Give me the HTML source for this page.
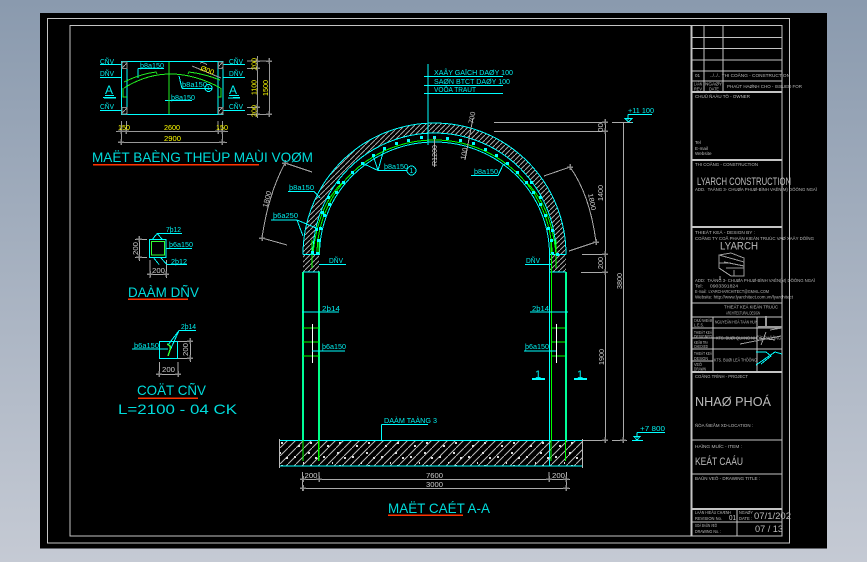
<!DOCTYPE html>
<html><head><meta charset="utf-8"><title>Drawing</title>
<style>
html,body{margin:0;padding:0;width:867px;height:562px;overflow:hidden;background:linear-gradient(180deg,#8a9aae 0%,#c5cad4 100%)}
svg{position:absolute;left:0;top:0;display:block}
text{font-family:"Liberation Sans",sans-serif;white-space:pre}
.c{fill:#0ee;font-size:7px}
.y{fill:#ff0;font-size:7px}
.w{fill:#ccc;font-size:7px}
.T{fill:#00dcdc;font-size:14px}
.b{fill:#bbb;font-size:4.6px}
.B{fill:#bbb;font-size:11px}
</style></head><body>
<svg width="867" height="562" viewBox="0 0 867 562" xmlns="http://www.w3.org/2000/svg">
<defs>
<pattern id="h" patternUnits="userSpaceOnUse" width="5" height="5"><path d="M-1,6L6,-1" stroke="#aaa" stroke-width="1" fill="none"/></pattern>
<pattern id="f" patternUnits="userSpaceOnUse" width="8" height="8"><path d="M-1,9L9,-1" stroke="#bbb" stroke-width="1" fill="none"/></pattern>
<pattern id="d" patternUnits="userSpaceOnUse" width="29" height="23"><path d="M8,9h2M20,6h2M4,20h2M18,16h2M25,21h2M13,3h1" stroke="#ddd" stroke-width="2"/></pattern>
<path id="t" d="M-3,0H3M0,-3V3" stroke="#888" stroke-width="1.5" fill="none"/>
</defs>
<rect x="40" y="13" width="787" height="535.5" fill="#000"/>

<g shape-rendering="crispEdges">
<!-- frames -->
<g fill="none" stroke="#c4c4c4" stroke-width="1">
<rect x="47.5" y="18.5" width="742" height="524.5"/>
<rect x="70" y="25.5" width="712" height="510.5"/>
<path d="M691.5,25V536" stroke-width="2"/>
<path d="M691,37.5H782M691,48.5H782M691,60H782M691,71H782M691,81H782"/>
<path d="M691,92H782M691,160H782M691,227H782M691,372H782M691,509H782" stroke-width="2"/>
<path d="M704,25.5V92M723,25.5V92"/>
<path d="M691,303H782M691,317H782M691,328H782M713,338H757M691,338H713M691,349H782M691,361H713"/>
<path d="M713,317V372M757,317V372"/>
<path d="M691,440H782M691,474H782M691,522H782M737,509V536"/>
</g>

<!-- plan -->
<g fill="none" stroke="#0ff" stroke-width="1">
<rect x="121.5" y="61.5" width="101.5" height="53"/>
<path d="M127,61V114M218,61V114"/>
<path d="M100,64.5H121M100,77.5H121M100,110.5H121M223,64.5H245M223,77.5H245M223,110.5H245"/>
<path d="M103,97.5H116M233,97.5H240" stroke-width="1"/>
<path d="M105,95.5H114M104,98H116" stroke-width="1"/>
<path d="M228,98H240M229,95.5H239" stroke-width="1"/>
<path d="M138,68.5H164M138,68.5V78M165,100.5H192M182,88.5H212M182,88.5L179,76"/>
</g>
<g fill="url(#h)" stroke="#888" stroke-width=".6">
<rect x="122" y="62" width="5" height="6.5"/><rect x="122" y="107.5" width="5" height="6.5"/>
<rect x="218.5" y="62" width="4.5" height="6.5"/><rect x="218.5" y="107.5" width="4.5" height="6.5"/>
</g>
<g fill="none" stroke="#2e2" stroke-width="1">
<path d="M169,62V114M124,88Q169,60 220.5,88M124,82Q140,74 156,72L157,74M188,74L189,72Q205,74 220,80"/>
<path d="M123,88V97H127M221,88V97H218"/>
</g>
<circle cx="208.5" cy="88" r="3.5" fill="none" stroke="#0ff"/>
<g fill="none" stroke="#999" stroke-width="1">
<path d="M192,66L221,78"/>
<path d="M257.5,56V118M269.5,60V115M247,61H272M247,68.5H260M247,107.5H260M247,114.5H272"/>
<path d="M116,131.5H228M120,142.5H227M121.5,121V145M126.5,121V134M218,121V134M222.5,121V145"/>
<path d="M200,63C203,62 205,63 207,65"/>
</g>
<g fill="none" stroke="#f30" stroke-width="1.5">
<path d="M93,164.5H259M128,299H188M138,398H198M388,515H463"/>
</g>

<!-- section -->
<path d="M303,254.5A131.5,131.5 0 0 1 566,254.5H556A121.5,121.5 0 0 0 313,254.5Z" fill="url(#h)"/>
<g fill="none" stroke="#0ff" stroke-width="1">
<path d="M303,254.5A131.5,131.5 0 0 1 566,254.5M313,254.5A121.5,121.5 0 0 1 556,254.5"/>
<path d="M319.5,254.5A115,112.5 0 0 1 549.5,254.5"/>
<path d="M549.5,254V466"/>
</g>
<g fill="none" stroke="#0f0" stroke-width="1">
<path d="M317,254.5A117.5,114.5 0 0 1 552,254.5"/>
<path d="M313,254Q318,205 343,182M556,254Q551,205 526,182"/>
<path d="M312,254V240M319,254V240M556,254V240M551,254V240"/>
</g>
<g fill="url(#h)"><rect x="303" y="254" width="16" height="18"/><rect x="550" y="254" width="16" height="18"/></g>
<path d="M303,254.5H320M303,272H320M549,254.5H566M549,272H566" stroke="#0ff" fill="none"/>
<path d="M312,254V268M556,254V268" stroke="#0f0" fill="none"/>
<g fill="#0ff">
<rect x="420" y="136" width="3" height="3"/><rect x="407" y="139" width="3" height="3"/><rect x="395" y="142" width="3" height="3"/><rect x="383" y="147" width="3" height="3"/><rect x="372" y="154" width="3" height="3"/><rect x="361" y="162" width="3" height="3"/><rect x="351" y="171" width="3" height="3"/><rect x="342" y="181" width="3" height="3"/><rect x="335" y="191" width="3" height="3"/><rect x="328" y="203" width="3" height="3"/><rect x="323" y="214" width="3" height="3"/><rect x="319" y="227" width="3" height="3"/><rect x="317" y="239" width="3" height="3"/><rect x="316" y="252" width="3" height="3"/>
<rect x="337" y="181" width="3" height="3"/><rect x="327" y="196" width="3" height="3"/><rect x="321" y="211" width="3" height="3"/><rect x="315" y="228" width="3" height="3"/><rect x="311" y="251" width="3" height="3"/>
<rect x="433" y="136" width="3" height="3"/><rect x="446" y="137" width="3" height="3"/><rect x="459" y="139" width="3" height="3"/><rect x="472" y="142" width="3" height="3"/><rect x="484" y="148" width="3" height="3"/><rect x="495" y="154" width="3" height="3"/><rect x="506" y="162" width="3" height="3"/><rect x="516" y="171" width="3" height="3"/><rect x="525" y="181" width="3" height="3"/><rect x="532" y="191" width="3" height="3"/><rect x="539" y="203" width="3" height="3"/><rect x="544" y="214" width="3" height="3"/><rect x="547" y="227" width="3" height="3"/><rect x="550" y="239" width="3" height="3"/><rect x="551" y="252" width="3" height="3"/>
<rect x="530" y="181" width="3" height="3"/><rect x="539" y="196" width="3" height="3"/><rect x="551" y="229" width="3" height="3"/><rect x="556" y="253" width="3" height="3"/>
</g>

<!-- columns -->
<path d="M303,272V440M566,272V440" stroke="#00ff99" stroke-width="2" fill="none"/>
<path d="M319,272V440" stroke="#0f8" stroke-width="2" fill="none"/>
<path d="M551.5,254V440" stroke="#0f0" stroke-width="1" fill="none"/>
<path d="M303,328H319M303,342H319M303,356H319M552,328H565M552,342H565M552,356H565" stroke="#0f0" fill="none"/>
<path d="M312.5,324V363M556.5,324V363" stroke="#fff" fill="none"/>
<g fill="none" stroke="#0ff" stroke-width="1">
<path d="M319,264.5H346M525,264.5H551M302,312H339M530,312H568M312,351H345M524,351H556"/>
<path d="M288,191.5H314L320,198M271,220H297L316,228M297,220L303,236"/>
<path d="M378,170.5H407M378,170.5L362,163M378,170.5L373,155M378,170.5L384,149"/>
<circle cx="411.5" cy="170.5" r="4.5"/>
<path d="M471,175.5H498L503,165L507,163"/>
<path d="M428,64V145M424,76.5H503M424,85.5H503M424,93.5H503"/>
<path d="M381.5,424.5V440M381.5,424.5H428"/>
<path d="M620,122.5H633M628,114.5V120M628,114.5H652M625,118.5H632L628.5,122Z"/>
<path d="M637,432.5V438M637,432.5H665M632,440.5H643M634,436.5H640L637,440Z"/>
</g>
<path d="M532,379H545M574,379H587" stroke="#0ff" stroke-width="2" fill="none"/>

<!-- foundation -->
<rect x="279" y="440" width="303" height="26" fill="url(#f)"/>
<rect x="279" y="440" width="303" height="26" fill="url(#d)"/>
<path d="M279,440.5H582M279,466H582" stroke="#0ff" fill="none"/>
<path d="M279.5,439V468M582.5,439V468" stroke="#bbb" fill="none"/>
<path d="M303,440V461M551,440V461M565.5,440V461" stroke="#0f0" fill="none"/>
<path d="M318.5,440V461" stroke="#0f0" stroke-width="1.5" fill="none"/>

<!-- dims -->
<g fill="none" stroke="#aaa" stroke-width="1">
<path d="M300,479.5H570M300,488.5H570M302.5,472V491M319,472V482M549,472V482M566.5,472V491"/>
<path d="M494,122.5H608M494,131.5H608M582,254.5H608M581,272.5H608M582,440.5H608M612,440.5H627M612,122.5H632"/>
<path d="M605.5,122V442M623.5,122V442"/>
<path d="M285,163L312,172M285,163Q268,195 262,238L287,245"/>
<path d="M570,167L544,176M570,167Q590,195 596,242L569,251"/>
<path d="M434.5,137V167M473,118L465,160"/>
<path d="M139.5,236V261M135,239.5H147M135,257.5H147M147,274.5H169M150,260V278M166.5,260V278"/>
<path d="M190.5,338V362M178,341.5H193M178,358.5H193M156,374.5H180M159.5,362V376M178,362V376"/>
</g>
<use href="#t" x="285" y="163"/><use href="#t" x="262" y="238"/><use href="#t" x="570" y="167"/><use href="#t" x="596" y="242"/>
<use href="#t" x="605" y="122"/><use href="#t" x="605" y="131"/><use href="#t" x="605" y="254"/><use href="#t" x="605" y="272"/><use href="#t" x="605" y="440"/><use href="#t" x="623" y="440"/>
<use href="#t" x="303" y="479"/><use href="#t" x="319" y="479"/><use href="#t" x="549" y="479"/><use href="#t" x="566" y="479"/><use href="#t" x="303" y="488"/><use href="#t" x="566" y="488"/>
<use href="#t" x="257" y="61"/><use href="#t" x="269" y="61"/><use href="#t" x="257" y="107"/><use href="#t" x="257" y="114"/><use href="#t" x="269" y="114"/><use href="#t" x="257" y="68"/>
<use href="#t" x="121" y="131"/><use href="#t" x="126" y="131"/><use href="#t" x="218" y="131"/><use href="#t" x="222" y="131"/><use href="#t" x="121" y="142"/><use href="#t" x="222" y="142"/>
<use href="#t" x="139" y="239"/><use href="#t" x="139" y="257"/><use href="#t" x="150" y="274"/><use href="#t" x="166" y="274"/><use href="#t" x="190" y="341"/><use href="#t" x="190" y="358"/><use href="#t" x="159" y="374"/><use href="#t" x="178" y="374"/>

<!-- details -->
<g fill="none" stroke="#0ff">
<rect x="149.5" y="239.5" width="16.5" height="18"/>
<path d="M157,233.5H182M157,233.5L152,240M157,233.5L163,240M166,248.5H192M167,264.5H187M167,264.5L160,257M159,264.5L153,257"/>
<rect x="159.5" y="341.5" width="18" height="17"/>
<path d="M179,330.5H196M179,330.5L168,345M179,330.5L168,355M132,349H168"/>
</g>
<rect x="151.5" y="241.5" width="13" height="13.5" fill="none" stroke="#3f3"/>
<path d="M167,344L170,346V350L168,356" fill="none" stroke="#3f3" stroke-width="1.5"/>

<!-- signatures / logo -->
<g fill="none" stroke="#999">
<path d="M719,255V268L731,276H744V258L731,253Z M719,255L744,262M724,262L744,266M726,268H744M719,263H731M720,276V280M734,270V276"/>
<path d="M766,316V327H782M766,327H758" stroke-width="2"/>
<path d="M740,344L781,336M761,345L766,332M770,330L782,328M759,338L775,340"/>
</g>
<path d="M756,352H766L771,356L761,364M756,365L775,352L782,354" fill="none" stroke="#0ff" stroke-width="1"/>
</g>

<!-- plan text -->
<text class="c" x="100" y="64" textLength="14" lengthAdjust="spacingAndGlyphs">CÑV</text>
<text class="c" x="100" y="76" textLength="14" lengthAdjust="spacingAndGlyphs">DÑV</text>
<text class="c" x="100" y="109" textLength="14" lengthAdjust="spacingAndGlyphs">CÑV</text>
<text class="c" x="229" y="64" textLength="14" lengthAdjust="spacingAndGlyphs">CÑV</text>
<text class="c" x="229" y="76" textLength="14" lengthAdjust="spacingAndGlyphs">DÑV</text>
<text class="c" x="229" y="109" textLength="14" lengthAdjust="spacingAndGlyphs">CÑV</text>
<text class="c" style="font-size:12px" x="105" y="94">A</text>
<text class="c" style="font-size:12px" x="229" y="94">A</text>
<text class="c" x="140" y="68" textLength="24" lengthAdjust="spacingAndGlyphs">þ8a150</text>
<text class="c" x="182" y="87" textLength="25" lengthAdjust="spacingAndGlyphs">þ8a150</text>
<text class="c" x="171" y="100" textLength="24" lengthAdjust="spacingAndGlyphs">þ8a150</text>
<text class="c" style="font-size:5px" x="207" y="90">1</text>
<text class="y" x="200" y="70" textLength="14" lengthAdjust="spacingAndGlyphs" transform="rotate(20 200 70)">Ø00</text>
<text class="y" x="164" y="130" textLength="16" lengthAdjust="spacingAndGlyphs">2600</text>
<text class="y" x="164" y="141" textLength="17" lengthAdjust="spacingAndGlyphs">2900</text>
<text class="y" x="118" y="130" textLength="12" lengthAdjust="spacingAndGlyphs">150</text>
<text class="y" x="216" y="130" textLength="12" lengthAdjust="spacingAndGlyphs">150</text>
<g class="y">
<text class="y" transform="translate(256.5,70) rotate(-90)" textLength="12" lengthAdjust="spacingAndGlyphs">200</text>
<text class="y" transform="translate(256.5,95) rotate(-90)" textLength="15" lengthAdjust="spacingAndGlyphs">1100</text>
<text class="y" transform="translate(256.5,117) rotate(-90)" textLength="12" lengthAdjust="spacingAndGlyphs">200</text>
<text class="y" transform="translate(268,96) rotate(-90)" textLength="16" lengthAdjust="spacingAndGlyphs">1500</text>
</g>
<text class="T" x="92" y="162" textLength="221" lengthAdjust="spacingAndGlyphs">MAËT BAÈNG THEÙP MAÙI VOØM</text>

<!-- section text -->
<text class="c" x="434" y="75" textLength="79" lengthAdjust="spacingAndGlyphs">XAÂY GAÏCH DAØY 100</text>
<text class="c" x="434" y="84" textLength="76" lengthAdjust="spacingAndGlyphs">SAØN BTCT DAØY 100</text>
<text class="c" x="434" y="92" textLength="42" lengthAdjust="spacingAndGlyphs">VÖÕA TRAÙT</text>
<text class="c" x="289" y="190" textLength="25" lengthAdjust="spacingAndGlyphs">þ8a150</text>
<text class="c" x="273" y="218" textLength="25" lengthAdjust="spacingAndGlyphs">þ6a250</text>
<text class="c" x="384" y="169" textLength="24" lengthAdjust="spacingAndGlyphs">þ8a150</text>
<text class="c" style="font-size:7px" x="409.5" y="173">1</text>
<text class="c" x="474" y="174" textLength="24" lengthAdjust="spacingAndGlyphs">þ8a150</text>
<text class="c" x="329" y="263" textLength="14" lengthAdjust="spacingAndGlyphs">DÑV</text>
<text class="c" x="526" y="263" textLength="14" lengthAdjust="spacingAndGlyphs">DÑV</text>
<text class="c" x="322" y="311" textLength="18" lengthAdjust="spacingAndGlyphs">2þ14</text>
<text class="c" x="532" y="311" textLength="17" lengthAdjust="spacingAndGlyphs">2þ14</text>
<text class="c" x="322" y="349" textLength="24" lengthAdjust="spacingAndGlyphs">þ6a150</text>
<text class="c" x="525" y="349" textLength="24" lengthAdjust="spacingAndGlyphs">þ6a150</text>
<text class="c" style="font-size:11px" x="535" y="378">1</text>
<text class="c" style="font-size:11px" x="577" y="378">1</text>
<text class="c" x="384" y="423" textLength="53" lengthAdjust="spacingAndGlyphs">DAÀM TAÀNG 3</text>
<text class="c" x="628" y="113" textLength="26" lengthAdjust="spacingAndGlyphs">+11 100</text>
<text class="c" x="640" y="431" textLength="25" lengthAdjust="spacingAndGlyphs">+7 800</text>
<text class="w" x="304.5" y="478" textLength="13" lengthAdjust="spacingAndGlyphs">200</text>
<text class="w" x="426" y="478" textLength="17" lengthAdjust="spacingAndGlyphs">7600</text>
<text class="w" x="552" y="478" textLength="13" lengthAdjust="spacingAndGlyphs">200</text>
<text class="w" x="426" y="487" textLength="17" lengthAdjust="spacingAndGlyphs">3000</text>
<text class="w" transform="translate(437,166) rotate(-90)" textLength="21" lengthAdjust="spacingAndGlyphs">R1200</text>
<text class="w" transform="translate(465,160) rotate(-78)" textLength="12" lengthAdjust="spacingAndGlyphs">100</text>
<text class="w" transform="translate(473,124) rotate(-78)" textLength="12" lengthAdjust="spacingAndGlyphs">700</text>
<text class="w" transform="translate(603,132) rotate(-90)" textLength="9" lengthAdjust="spacingAndGlyphs">00</text>
<text class="w" transform="translate(603,201) rotate(-90)" textLength="16" lengthAdjust="spacingAndGlyphs">1400</text>
<text class="w" transform="translate(603,269) rotate(-90)" textLength="12" lengthAdjust="spacingAndGlyphs">200</text>
<text class="w" transform="translate(604,365) rotate(-90)" textLength="16" lengthAdjust="spacingAndGlyphs">1900</text>
<text class="w" transform="translate(622,289) rotate(-90)" textLength="16" lengthAdjust="spacingAndGlyphs">3800</text>
<text class="w" transform="translate(267,208) rotate(-75)" textLength="17" lengthAdjust="spacingAndGlyphs">1800</text>
<text class="w" transform="translate(588,194) rotate(78)" textLength="17" lengthAdjust="spacingAndGlyphs">1800</text>
<text class="T" x="388" y="513" textLength="102" lengthAdjust="spacingAndGlyphs">MAËT CAÉT A-A</text>

<!-- detail text -->
<text class="c" x="166" y="232" textLength="15" lengthAdjust="spacingAndGlyphs">7þ12</text>
<text class="c" x="169" y="247" textLength="24" lengthAdjust="spacingAndGlyphs">þ6a150</text>
<text class="c" x="171" y="264" textLength="16" lengthAdjust="spacingAndGlyphs">2þ12</text>
<text class="w" x="152" y="273" textLength="13" lengthAdjust="spacingAndGlyphs">200</text>
<text class="w" transform="translate(138,255) rotate(-90)" textLength="13" lengthAdjust="spacingAndGlyphs">200</text>
<text class="T" x="128" y="297" textLength="71" lengthAdjust="spacingAndGlyphs">DAÀM DÑV</text>
<text class="c" x="181" y="329" textLength="15" lengthAdjust="spacingAndGlyphs">2þ14</text>
<text class="c" x="134" y="348" textLength="25" lengthAdjust="spacingAndGlyphs">þ6a150</text>
<text class="w" transform="translate(188,356) rotate(-90)" textLength="13" lengthAdjust="spacingAndGlyphs">200</text>
<text class="w" x="162" y="372" textLength="13" lengthAdjust="spacingAndGlyphs">200</text>
<text class="T" x="137" y="395" textLength="69" lengthAdjust="spacingAndGlyphs">COÄT CÑV</text>
<text class="T" x="118" y="414" textLength="119" lengthAdjust="spacingAndGlyphs">L=2100 - 04 CK</text>

<!-- title block text -->
<text class="b" x="695" y="77">01</text>
<text class="b" x="710" y="77" textLength="80" lengthAdjust="spacingAndGlyphs">../../.. THI COÂNG - CONSTRUCTION</text>
<text class="b" x="694" y="85.5" textLength="8" lengthAdjust="spacingAndGlyphs">LAÀN</text>
<text class="b" x="694" y="90.5" textLength="8" lengthAdjust="spacingAndGlyphs">REV</text>
<text class="b" x="705" y="85.5" textLength="17" lengthAdjust="spacingAndGlyphs">NGAØY</text>
<text class="b" x="709" y="90.5" textLength="10" lengthAdjust="spacingAndGlyphs">DATE</text>
<text class="b" x="727" y="88" textLength="75" lengthAdjust="spacingAndGlyphs">PHAÙT HAØNH CHO - ISSUED FOR</text>
<text class="b" x="695" y="98" textLength="55" lengthAdjust="spacingAndGlyphs">CHUÛ ÑAÀU TÖ - OWNER</text>
<text class="b" x="695" y="144">Tel</text>
<text class="b" x="695" y="150">E-mail</text>
<text class="b" x="695" y="155">Website</text>
<text class="b" x="695" y="166" textLength="63" lengthAdjust="spacingAndGlyphs">THI COÂNG - CONSTRUCTION</text>
<text class="B" x="697" y="185" textLength="94" lengthAdjust="spacingAndGlyphs">LYARCH CONSTRUCTION</text>
<text class="b" x="695" y="191" textLength="122" lengthAdjust="spacingAndGlyphs">ADD.  TAÀNG 3- CHUØA PHUØ-BÌNH VAÊN(M) DÖÔNG NGAÏ</text>
<text class="b" x="695" y="234" textLength="60" lengthAdjust="spacingAndGlyphs">THIEÁT KEÁ - DESIGN BY :</text>
<text class="b" x="695" y="240" textLength="119" lengthAdjust="spacingAndGlyphs">COÂNG TY COÅ PHAÀN KIEÁN TRUÙC VAØ XAÂY DÖÏNG</text>
<text class="B" x="720" y="249.5" textLength="38" lengthAdjust="spacingAndGlyphs">LYARCH</text>
<text class="b" x="695" y="282" textLength="120" lengthAdjust="spacingAndGlyphs">ADD:  TAÀNG 3- CHUØA PHUØ-BÌNH VAÊN(M) DÖÔNG NGAÏ</text>
<text class="b" x="695" y="287.5" textLength="43" lengthAdjust="spacingAndGlyphs">Tel:     0903391824</text>
<text class="b" x="695" y="293" textLength="74" lengthAdjust="spacingAndGlyphs">E-mail:  LYARCHARCHITECT@GMAIL.COM</text>
<text class="b" x="695" y="298.5" textLength="98" lengthAdjust="spacingAndGlyphs">Website: http://www.lyarchitect.com.vn/lyarchitect</text>
<text class="b" x="724" y="308.5" textLength="54" lengthAdjust="spacingAndGlyphs">THIEÁT KEÁ KIEÁN TRUÙC</text>
<text class="b" x="726" y="314.5" textLength="34" lengthAdjust="spacingAndGlyphs">ARCHITECTURAL DESIGN</text>
<text class="b" x="694" y="322" textLength="18" lengthAdjust="spacingAndGlyphs">CHUÛ NHIEÄM</text>
<text class="b" x="694" y="326.5" textLength="10" lengthAdjust="spacingAndGlyphs">L.E.S.</text>
<text class="b" x="715" y="323.5" textLength="42" lengthAdjust="spacingAndGlyphs">NGUYEÃN HOÀ TAÁN HUY</text>
<text class="b" x="694" y="334" textLength="18" lengthAdjust="spacingAndGlyphs">THIEÁT KEÁ</text>
<text class="b" x="694" y="338" textLength="18" lengthAdjust="spacingAndGlyphs">DESIGNED</text>
<text class="b" x="694" y="344" textLength="14" lengthAdjust="spacingAndGlyphs">KIEÅM TRA</text>
<text class="b" x="694" y="348" textLength="14" lengthAdjust="spacingAndGlyphs">CHECKED</text>
<text class="b" x="716" y="339.5" textLength="65" lengthAdjust="spacingAndGlyphs">KTS. BUØI QUANG NHÖÏT PHÖÔNG</text>
<text class="b" x="694" y="355" textLength="18" lengthAdjust="spacingAndGlyphs">THIEÁT KEÁ</text>
<text class="b" x="694" y="360" textLength="14" lengthAdjust="spacingAndGlyphs">DESIGN</text>
<text class="b" x="694" y="366" textLength="8" lengthAdjust="spacingAndGlyphs">VEÕ</text>
<text class="b" x="694" y="370.5" textLength="12" lengthAdjust="spacingAndGlyphs">DRAWN</text>
<text class="b" x="714" y="361.5" textLength="43" lengthAdjust="spacingAndGlyphs">KTS. BUØI LEÂ THÖÔNG</text>
<text class="b" x="695" y="378" textLength="53" lengthAdjust="spacingAndGlyphs">COÂNG TRÌNH - PROJECT</text>
<text class="B" style="font-size:13px" x="695" y="406" textLength="76" lengthAdjust="spacingAndGlyphs">NHAØ PHOÁ</text>
<text class="b" x="695" y="427" textLength="58" lengthAdjust="spacingAndGlyphs">ÑÒA ÑIEÅM XD-LOCATION :</text>
<text class="b" x="695" y="448" textLength="47" lengthAdjust="spacingAndGlyphs">HAÏNG MUÏC - ITEM :</text>
<text class="B" x="695" y="465" textLength="48" lengthAdjust="spacingAndGlyphs">KEÁT CAÁU</text>
<text class="b" x="695" y="480" textLength="65" lengthAdjust="spacingAndGlyphs">BAÛN VEÕ - DRAWING TITLE :</text>
<text class="b" x="695" y="514" textLength="36" lengthAdjust="spacingAndGlyphs">LAÀN HIEÄU CHÆNH</text>
<text class="b" x="695" y="520" textLength="27" lengthAdjust="spacingAndGlyphs">REVISION No.</text>
<text class="w" x="729" y="520" textLength="7" lengthAdjust="spacingAndGlyphs">01</text>
<text class="b" x="739" y="514" textLength="14" lengthAdjust="spacingAndGlyphs">NGAØY</text>
<text class="b" x="739" y="520" textLength="13" lengthAdjust="spacingAndGlyphs">DATE :</text>
<text class="B" style="font-size:9px" x="754" y="519" textLength="37" lengthAdjust="spacingAndGlyphs">07/1/202</text>
<text class="b" x="695" y="527" textLength="22" lengthAdjust="spacingAndGlyphs">SOÁ BAÛN VEÕ</text>
<text class="b" x="695" y="533" textLength="26" lengthAdjust="spacingAndGlyphs">DRAWING No. :</text>
<text class="B" style="font-size:9px" x="755" y="532" textLength="28" lengthAdjust="spacingAndGlyphs">07 / 13</text>
</svg>
</body></html>
